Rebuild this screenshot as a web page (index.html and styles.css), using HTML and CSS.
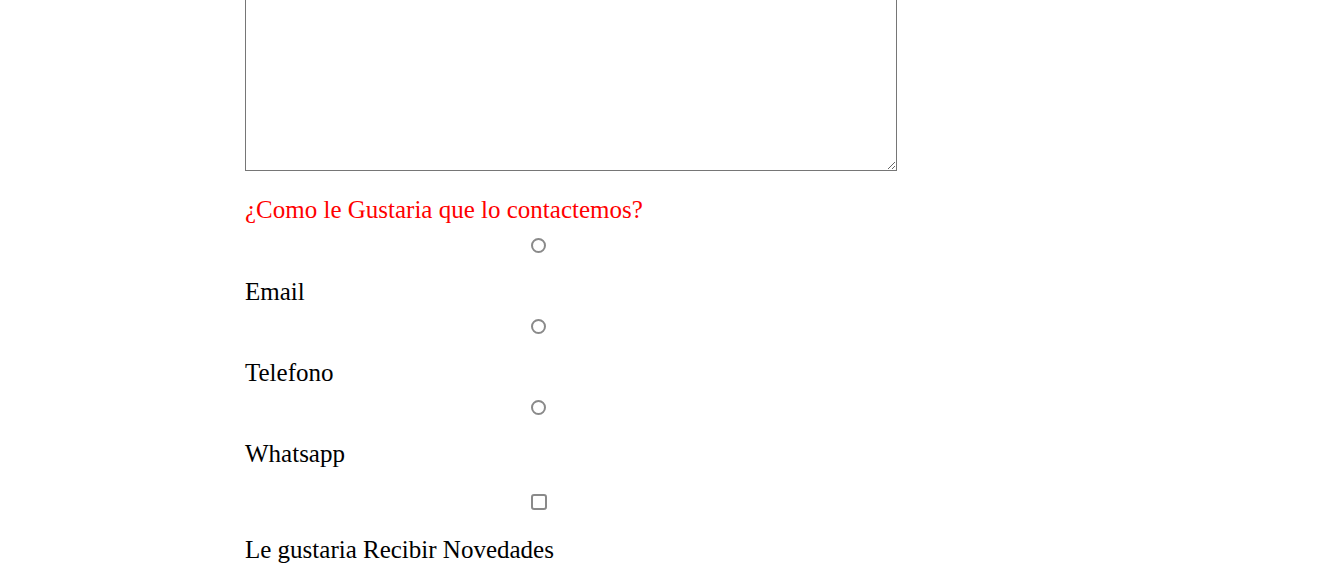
FILE: index.html
```html
<!DOCTYPE html>
<html lang="es">
<head>
<meta charset="utf-8">
<title>Contacto</title>
<link rel="stylesheet" href="styles.css">
</head>
<body>
<form class="form">
  <textarea class="message"></textarea>
  <p class="question">¿Como le Gustaria que lo contactemos?</p>
  <div class="option">
    <input class="radio" type="radio" id="email" name="contacto">
    <label class="label" for="email">Email</label>
  </div>
  <div class="option">
    <input class="radio" type="radio" id="telefono" name="contacto">
    <label class="label" for="telefono">Telefono</label>
  </div>
  <div class="option">
    <input class="radio" type="radio" id="whatsapp" name="contacto">
    <label class="label" for="whatsapp">Whatsapp</label>
  </div>
  <div class="option option-check">
    <input class="check" type="checkbox" id="novedades">
    <label class="label" for="novedades">Le gustaria Recibir Novedades</label>
  </div>
</form>
</body>
</html>
```
FILE: styles.css
```css
html, body {
  margin: 0;
  padding: 0;
  background: #ffffff;
}

.form {
  width: 652px;
  margin-left: 245px;
  display: flex;
  flex-direction: column;
  font-family: "Liberation Serif", "Times New Roman", serif;
  font-size: 25px;
  line-height: 28px;
  color: #000000;
}

.message {
  box-sizing: border-box;
  width: 652px;
  height: 200px;
  margin: -29px 0 0 0;
  border: 1px solid #767676;
  background: #ffffff;
  display: block;
  resize: both;
}

.question {
  margin: 25px 0 14px 0;
  color: #ff0000;
}

.option {
  display: flex;
  flex-direction: column;
  align-items: flex-start;
  margin-bottom: 13px;
}

.radio {
  -webkit-appearance: none;
  appearance: none;
  box-sizing: border-box;
  width: 15px;
  height: 15px;
  border: 2px solid #8a8a8a;
  border-radius: 50%;
  background: #ffffff;
  margin: 0 0 25px 286px;
}

.check {
  -webkit-appearance: none;
  appearance: none;
  box-sizing: border-box;
  width: 16px;
  height: 16px;
  border: 2px solid #8a8a8a;
  border-radius: 3px;
  background: #ffffff;
  margin: 13px 0 26px 286px;
}

.label {
  display: block;
}
```
